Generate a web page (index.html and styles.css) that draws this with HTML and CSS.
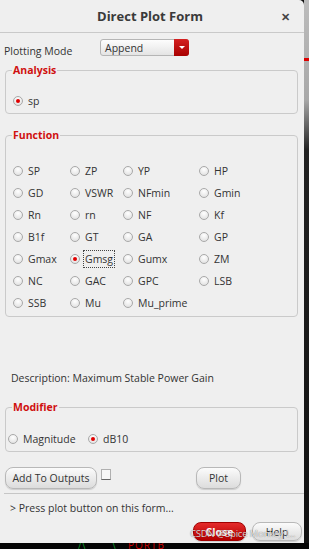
FILE: index.html
```html
<!DOCTYPE html>
<html lang="en">
<head>
  <meta charset="UTF-8">
  <title>Direct Plot Form</title>
  <link rel="stylesheet" href="styles.css">
</head>
<body>
  <div class="screen">
    <div class="window">
      <div class="titlebar">
        <span class="title">Direct Plot Form</span>
        <span class="close-x">&#x2715;</span>
      </div>

      <div class="mode-row">
        <span class="mode-label">Plotting Mode</span>
        <div class="combo">
          <span>Append</span>
          <span class="combo-arrow"></span>
        </div>
      </div>

      <fieldset class="group analysis">
        <legend>Analysis</legend>
        <label class="radio"><span class="dot on"></span>sp</label>
      </fieldset>

      <fieldset class="group function">
        <legend>Function</legend>
        <div class="func-grid">
          <label class="radio"><span class="dot"></span>SP</label>
          <label class="radio"><span class="dot"></span>ZP</label>
          <label class="radio"><span class="dot"></span>YP</label>
          <label class="radio"><span class="dot"></span>HP</label>
          <label class="radio"><span class="dot"></span>GD</label>
          <label class="radio"><span class="dot"></span>VSWR</label>
          <label class="radio"><span class="dot"></span>NFmin</label>
          <label class="radio"><span class="dot"></span>Gmin</label>
          <label class="radio"><span class="dot"></span>Rn</label>
          <label class="radio"><span class="dot"></span>rn</label>
          <label class="radio"><span class="dot"></span>NF</label>
          <label class="radio"><span class="dot"></span>Kf</label>
          <label class="radio"><span class="dot"></span>B1f</label>
          <label class="radio"><span class="dot"></span>GT</label>
          <label class="radio"><span class="dot"></span>GA</label>
          <label class="radio"><span class="dot"></span>GP</label>
          <label class="radio"><span class="dot"></span>Gmax</label>
          <label class="radio"><span class="dot on"></span><span class="focus">Gmsg</span></label>
          <label class="radio"><span class="dot"></span>Gumx</label>
          <label class="radio"><span class="dot"></span>ZM</label>
          <label class="radio"><span class="dot"></span>NC</label>
          <label class="radio"><span class="dot"></span>GAC</label>
          <label class="radio"><span class="dot"></span>GPC</label>
          <label class="radio"><span class="dot"></span>LSB</label>
          <label class="radio"><span class="dot"></span>SSB</label>
          <label class="radio"><span class="dot"></span>Mu</label>
          <label class="radio"><span class="dot"></span>Mu_prime</label>
        </div>
      </fieldset>

      <div class="description">Description: Maximum Stable Power Gain</div>

      <fieldset class="group modifier">
        <legend>Modifier</legend>
        <div class="mod-row">
          <label class="radio"><span class="dot"></span>Magnitude</label>
          <label class="radio"><span class="dot on"></span>dB10</label>
        </div>
      </fieldset>

      <div class="action-row">
        <button class="btn add">Add To Outputs</button>
        <span class="check"></span>
        <button class="btn plot">Plot</button>
      </div>

      <div class="status">&gt; Press plot button on this form...</div>

      <div class="footer">
        <button class="btn red">Close</button>
        <button class="btn help">Help</button>
        <span class="watermark">CSDN @Spice Monkey L..</span>
      </div>
    </div>
    <div class="side">
      <span class="side-red"></span>
    </div>
    <div class="below">
      <span class="wire green">/\</span>
      <span class="wire green second">\</span>
      <span class="wire red-text">PORTB</span>
    </div>
  </div>
</body>
</html>
```

FILE: styles.css
```css
body {
  margin: 0;
  background: #111;
  font-family: 'Open Sans', 'Noto Sans', sans-serif;
  color: #333;
  font-size: 10.5px;
}

.screen {
  display: grid;
  grid-template-columns: 304px 5px;
  grid-template-rows: 543px 6px;
  width: 309px;
  height: 549px;
  overflow: hidden;
}

.window {
  background: #efefef;
  border-top-right-radius: 5px;
  display: flex;
  flex-direction: column;
  position: relative;
  overflow: hidden;
}

.titlebar {
  height: 32px;
  border-bottom: 1px solid #c9c9c9;
  display: flex;
  align-items: center;
  justify-content: center;
  position: relative;
  flex-shrink: 0;
}

.title {
  font-size: 13px;
  font-weight: bold;
  color: #3a3a3a;
  margin-right: 4px;
}

.close-x {
  position: absolute;
  right: 14px;
  top: 9px;
  font-size: 11px;
  font-weight: bold;
  color: #444;
}

.mode-row {
  display: flex;
  align-items: flex-start;
  padding: 6px 0 0 4px;
  height: 22px;
  flex-shrink: 0;
}

.mode-label {
  width: 96px;
  padding-top: 5px;
  color: #333;
}

.combo {
  width: 89px;
  height: 17px;
  border: 1px solid #b5b5b5;
  border-radius: 3px;
  background: linear-gradient(#fdfdfd, #e4e4e4);
  display: flex;
  align-items: center;
  padding-left: 4px;
  box-sizing: border-box;
  position: relative;
  color: #333;
}

.combo-arrow {
  position: absolute;
  right: -1px;
  top: -1px;
  width: 15px;
  height: 17px;
  background: linear-gradient(#d42020, #a80000);
  border-radius: 0 3px 3px 0;
}

.combo-arrow::after {
  content: '';
  position: absolute;
  left: 5px;
  top: 7px;
  border-left: 3px solid transparent;
  border-right: 3px solid transparent;
  border-top: 3px solid #fff;
}

.group {
  margin: 0 6px 0 5px;
  padding: 0;
  border: 1px solid #cacaca;
  border-radius: 4px;
  min-width: 0;
  flex-shrink: 0;
}

.group legend {
  color: #d01010;
  font-weight: bold;
  font-size: 10.5px;
  padding: 0 1px;
  margin-left: 6px;
}

.analysis {
  height: 49px;
  margin-top: 2px;
}

.analysis .radio {
  margin: 17px 0 0 7px;
}

.function {
  margin-top: 14px;
  height: 187px;
}

.func-grid {
  display: grid;
  grid-template-columns: 57px 53px 76px 70px;
  grid-auto-rows: 22px;
  padding: 18px 0 0 7px;
}

.radio {
  display: flex;
  align-items: center;
  gap: 5px;
  color: #333;
  white-space: nowrap;
}

.dot {
  width: 8px;
  height: 8px;
  border-radius: 50%;
  border: 1px solid #a9a9a9;
  background: radial-gradient(circle at 50% 30%, #ffffff, #dcdcdc);
  flex-shrink: 0;
  display: flex;
  align-items: center;
  justify-content: center;
}

.dot.on::after {
  content: '';
  width: 4px;
  height: 4px;
  border-radius: 50%;
  background: #e00000;
}

.focus {
  outline: 1px dotted #444;
  outline-offset: 0;
  padding: 1px 1px;
  margin-left: -1px;
}

.description {
  margin: 54px 0 0 11px;
  color: #333;
}

.modifier {
  margin-top: 15px;
  height: 50px;
}

.mod-row {
  display: flex;
  padding: 18px 0 0 2px;
}

.mod-row .radio:first-child {
  width: 80px;
}

.action-row {
  display: flex;
  align-items: center;
  margin-top: 14px;
  padding-left: 5px;
  height: 23px;
  flex-shrink: 0;
}

.btn {
  font-family: inherit;
  font-size: 10.5px;
  color: #333;
  height: 22px;
  border: 1px solid #b8b8b8;
  border-radius: 8px;
  background: linear-gradient(#fbfbfb, #dcdcdc);
  padding: 0;
  box-shadow: 0 1px 1px rgba(0, 0, 0, 0.15);
}

.btn.add {
  width: 92px;
}

.check {
  width: 8px;
  height: 9px;
  border: 1px solid #b0b0b0;
  border-bottom-color: #666;
  background: #f7f7f7;
  margin: -6px 0 0 4px;
}

.btn.plot {
  width: 45px;
  margin-left: 85px;
}

.status {
  border-top: 1px solid #c6c6c6;
  margin: 4px 0 0 4px;
  padding: 7px 0 0 6px;
  height: 21px;
  color: #333;
  flex-shrink: 0;
}

.footer {
  display: flex;
  padding-left: 193px;
  gap: 6px;
  position: relative;
  height: 19px;
  flex-shrink: 0;
}

.btn.red {
  width: 53px;
  height: 19px;
  border-color: #a00000;
  background: linear-gradient(#e42a2a, #b50000);
  color: #fff;
  font-weight: bold;
}

.btn.help {
  width: 50px;
  height: 19px;
}

.watermark {
  position: absolute;
  z-index: 1;
  left: 190px;
  top: 5px;
  color: rgba(250, 250, 250, 0.85);
  text-shadow: 0 0 1px rgba(0, 0, 0, 0.6);
  font-size: 9.5px;
  letter-spacing: -0.2px;
  white-space: nowrap;
}

.side {
  background: linear-gradient(#bcbcbc 0, #a8a8a8 100px, #222 150px, #111 100%);
  position: relative;
}

.side-red {
  position: absolute;
  left: 0;
  top: 58px;
  width: 5px;
  height: 3px;
  background: #d00;
}

.below {
  grid-column: 1 / 3;
  background: #050505;
  position: relative;
  overflow: hidden;
}

.wire {
  position: absolute;
  top: -3px;
  font-size: 10px;
  line-height: 10px;
}

.green {
  color: #0a9a2a;
  left: 78px;
}

.green.second {
  left: 112px;
}

.red-text {
  color: #c00;
  left: 128px;
  letter-spacing: 1px;
}
```
